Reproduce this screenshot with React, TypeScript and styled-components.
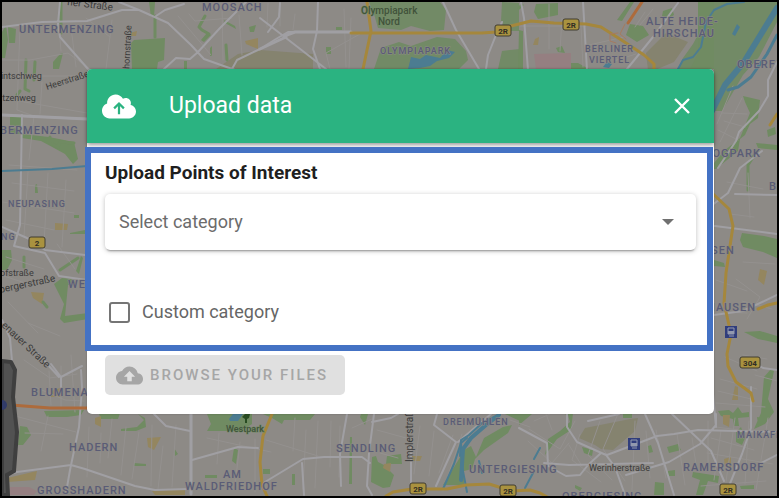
import React, { useState } from "react";
import styled, { createGlobalStyle } from "styled-components";

const GlobalStyle = createGlobalStyle`
  *, *::before, *::after { box-sizing: border-box; }
  body { margin: 0; font-family: Roboto, "Liberation Sans", sans-serif; }
`;

const Page = styled.main`
  position: relative;
  display: flex;
  align-items: flex-start;
  min-height: 100vh;
  padding: 67px 63px 24px 85px;
  border: 2px solid #000;
  background: #8d8a86;
  overflow: hidden;
`;

const MapCanvas = styled.svg`
  position: absolute;
  inset: -2px;
  width: calc(100% + 4px);
  height: calc(100% + 4px);
  font-family: Roboto, "Liberation Sans", sans-serif;
`;

const Dialog = styled.section`
  position: relative;
  flex: 1;
  min-width: 0;
  padding-bottom: 19px;
  border-radius: 5px;
  background: #fff;
  box-shadow: 0 0 2px rgba(0, 0, 0, 0.25);
`;

const Header = styled.header`
  display: flex;
  align-items: center;
  gap: 33px;
  height: 74px;
  padding: 0 20px 0 15px;
  border-radius: 5px 5px 0 0;
  background: #2bb381;
  color: #fff;
  box-shadow: 0 2px 4px rgba(0, 0, 0, 0.4);
`;

const Title = styled.h1`
  flex: 1;
  margin: 0;
  font-size: 23px;
  font-weight: 400;
  line-height: 32px;
`;

const CloseButton = styled.button`
  display: flex;
  padding: 0;
  border: 0;
  background: none;
  color: inherit;
  cursor: pointer;
`;

const Highlight = styled.div`
  position: relative;
  margin: 4px 1px 4px -2px;
  padding: 8px 11px 21px 14px;
  border: 6px solid #4472c4;
  background: #fff;
`;

const SectionTitle = styled.label`
  display: block;
  margin-bottom: 9px;
  color: #1f1f1f;
  font-size: 19px;
  font-weight: 700;
  line-height: 24px;
`;

const SelectBox = styled.div`
  display: grid;
  align-items: center;
  height: 56px;
  border-radius: 5px;
  background: #fff;
  box-shadow: 0 3px 2px -2px rgba(0, 0, 0, 0.3), 0 1px 5px rgba(0, 0, 0, 0.25);
  > * { grid-area: 1 / 1; }
  > svg { justify-self: end; margin-right: 22px; pointer-events: none; }
`;

const Select = styled.select`
  width: 100%;
  height: 100%;
  padding: 0 48px 0 14px;
  border: 0;
  border-radius: 5px;
  background: transparent;
  color: #6c6c6c;
  font: 400 18px/24px Roboto, "Liberation Sans", sans-serif;
  appearance: none;
`;

const CheckRow = styled.label`
  display: flex;
  align-items: center;
  width: fit-content;
  gap: 12px;
  margin: 50px 0 0 4px;
  color: #666;
  font-size: 18px;
  line-height: 24px;
`;

const CheckBox = styled.input`
  width: 21px;
  height: 21px;
  margin: 0;
  border: 2px solid #757575;
  border-radius: 3px;
  background: #fff;
  appearance: none;
  &:checked { background: #2bb381; }
`;

const BrowseButton = styled.button`
  display: flex;
  align-items: center;
  gap: 7px;
  height: 40px;
  margin-left: 18px;
  padding: 0 17px 0 11px;
  border: 0;
  border-radius: 5px;
  background: #e0e0e0;
  color: #a6a6a6;
  font: 500 15px/24px Roboto, "Liberation Sans", sans-serif;
  letter-spacing: 2px;
  white-space: nowrap;
`;

const C = {
  road: "#a09fa3", green: "#708b62", park: "#728a66",
  olive: "#85836f", sand: "#94865f", water: "#4c7c91", yellow: "#a5873c",
  orange: "#ad6b3c", pink: "#957f81",
};

const areas: [string, string][] = [
  [C.olive, "M216 69L238 54L260 50L313 54L313 70ZM648 70L646 53L666 33L688 42L674 62L655 70ZM579 438L585 428L630 419L638 418L635 431L613 450L601 449L595 445Z"],
  [C.green, "M131 43L134 40L165 38L164 60L158 62L157 69H132ZM2 32L6 25L8 40L5 58H2ZM8 27L16 29L15 43H9ZM149 2H155L154 17H151ZM53 62L60 54L63 53L59 69H53ZM201 40L207 33L211 35L204 42ZM224 20L235 26L236 29L225 23ZM249 27L256 25L254 32H250ZM184 61H187V69H184ZM210 48L212 46V56H210ZM326 47H331V54H326ZM336 27H342V30H336Z"],
  [C.park, "M369 2H440L446 10L444 30L430 31L411 26L401 30L378 28L374 14ZM374 69L381 48L399 42L411 46L437 37L455 39L466 51L468 60L459 69ZM498 69L502 51L520 49V70ZM502 2L519 3V31L507 31L501 21ZM708 2H777V22L759 57L743 75L722 111H714V69H678L683 58L693 44L700 31L706 16Z"],
  [C.green, "M536 4L558 3V15L538 19L534 12ZM519 30L523 31V69H518ZM556 48L562 46L565 53L558 52ZM567 63L578 63L589 69H565ZM626 35L630 24L643 26L649 35L637 42ZM663 11L672 8L674 15L669 18L662 16ZM617 20L630 2H634L622 21ZM698 4L706 2L704 12L698 12Z"],
  [C.green, "M698 2H714V69H690L698 54Z"],
  [C.green, "M743 96L760 100L758 118L750 124L745 135L740 139L738 151L716 169H709L724 151L740 138L750 113L745 102ZM756 143L777 145V150L758 148ZM767 130L775 127L776 134L768 137ZM740 240L742 233L764 236L777 239V258L763 252L743 247ZM714 260L724 263L725 267L714 266ZM744 332L760 331L777 336V343L758 339Z"],
  [C.green, "M8 127L22 130V134L11 134ZM22 134L49 137L74 142L78 159L73 164L65 154L54 148L41 141L22 138ZM10 117H22V127L10 125ZM70 233L85 230V234L70 234ZM54 284L62 278L71 279L77 284L68 285L65 316L88 313V319L64 323L60 319L64 304ZM76 271L81 256L83 258L79 274ZM2 250H11L12 260L7 270H2ZM74 215H79V218H74ZM35 185L37 184L38 193H35Z"],
  [C.green, "M20 426L27 427L31 435L23 445H18ZM44 411L84 410L81 415L67 417L47 417ZM99 414L120 413L118 419H101ZM121 429L137 427L144 420L138 414L145 418L146 427L136 431H121ZM134 463L146 464V466H134ZM205 475H217V478H205ZM232 461L234 448L238 450L236 464ZM174 448L178 454L175 456ZM207 414L252 414V424L241 431H207L211 424Z"],
  [C.green, "M263 414H315L310 420H284L282 424L272 418ZM361 414H368L365 425L360 417ZM372 457L376 456L378 462L384 465L394 475L390 487L383 488L371 482ZM387 456L401 454L402 464L386 464ZM350 437H352V484H349ZM263 469H270V474H263ZM292 474H295V485H292ZM459 459L464 450L471 446L476 457L484 438L503 427L512 425L508 433L484 450L475 459L472 469L464 471L464 485H443ZM505 414H520V421Z"],
  [C.green, "M519 414H532L519 425ZM548 439L560 431L570 422L568 415L561 413H573L571 430L557 439L549 450L545 455ZM582 447L593 450L592 456L584 453ZM575 485L582 488L580 491L575 488ZM623 414H632V418H623ZM667 447L678 444L681 450L669 453ZM648 446L651 445L653 452L649 453ZM655 482L664 483V495H654ZM668 471L675 470V476H667ZM693 472L719 476L718 483L708 481L703 495H696L700 480L692 477Z"],
  [C.green, "M718 411L729 410L733 413L738 407L742 413L749 412V417L738 418L739 426H734L733 419L721 416ZM764 377L771 369L774 371L768 399L774 412L765 424L754 429L761 413ZM736 432L741 427L745 438L742 445L736 442ZM740 486L754 485V489L741 489ZM757 417L763 418L758 424Z"],
  [C.sand, "M130 33L137 31L136 36H131ZM51 391L60 388V397H51ZM31 292L44 293L42 304L33 298ZM147 438L161 437L154 450L148 447ZM95 418L101 416L101 427L95 424ZM245 41L258 38V49L246 44ZM55 223L68 224L67 230H55ZM412 456H422L420 461H412ZM384 464L391 463L390 472L383 468ZM735 386L738 387V400H732ZM723 415H730L729 427L723 424ZM760 269L767 271L764 285L758 280ZM535 39L539 37L538 45H533ZM724 459L731 457V467H725ZM3 479L37 471L35 480L7 482ZM152 491L185 489V495H155Z"],
  [C.pink, "M534 54L571 53L571 69H536ZM10 487L29 487L37 491L34 495H8Z"],
];

const greens = [
  "M61 2L61 33", "M35 62L34 80", "M26 60L25 89L29 91", "M60 270L78 258", "M50 137L50 143L58 147L60 142L74 143", "M205 16L199 27L202 30L209 34",
  "M226 45L227 60", "M155 16L155 37", "M17 95L20 91", "M24 257L24 267", "M43 302L47 307", "M519 8L522 5", "M748 190L748 165L757 151",
];

const minor = [
  "M2 60L30 60L68 53L90 69M2 76H86M20 27L17 110L34 116L29 160M42 82L40 114M2 98L87 113M59 27L61 51M71 27L76 67M86 18L110 37M112 20L106 69",
  "M178 16L211 55M189 14L195 21L232 18M222 4L223 60M239 15L242 55M268 3L267 27M280 3V26M295 14L293 30M344 9L346 67M351 18L349 69M360 34L326 53L330 69",
  "M520 26H586M549 4V49M562 18L560 51M581 25L583 67M589 45L624 37M614 61L636 54M645 12L635 27M653 9L640 25",
  "M722 113L747 114M724 121L745 127M718 130L738 140M742 98L720 142M733 86L717 124M727 182L763 189M748 173L750 218M730 214L754 217M743 262L775 264M736 279L760 297L747 319M716 280L747 291M742 301L772 309M717 312L747 313",
  "M9 165L77 170M12 183L74 191M3 202L74 213M28 172L24 237M48 173L44 244M66 180L62 247M6 220L54 230M6 257L44 269M4 276L31 285M8 302L38 333M57 244L75 269M28 323L60 336",
  "M24 360L50 378L77 374M35 387L65 400L84 401M49 371L51 405M61 366V408M71 355L75 412M15 416L76 432M25 433L63 434M48 416L41 451M89 427L87 477M101 433L100 463M112 419L108 458M126 427L121 475M139 432L132 479M152 425L151 486M163 446L158 489M176 425L172 487M207 438L271 452M219 433L217 464M240 442L235 486M255 439L255 492M266 440L318 456M295 418L293 451M306 430L303 489M318 421L315 488M331 421L330 467M340 426L339 477M352 428L372 419M377 430L406 438M380 453L398 458M420 426L414 474M434 431L429 476M453 435L439 473M462 434L443 491M510 420L530 427",
  "M529 429L560 449L575 421M528 441L552 463L569 443M534 421L550 414M546 414L552 430M569 445L582 466M580 434L572 460L601 482M600 421L588 455L612 480M618 414L603 449L625 481M635 421L632 490M646 431L650 478M656 430L666 478M677 434L685 485M692 438L697 471M708 421V466M721 431L714 480M735 418L726 482M749 421L745 484M768 418L756 490M720 379L757 389M718 391L751 399M716 403L765 407M716 427L747 431M711 438L754 450M707 453L773 464M701 486L766 481M743 355L767 359M725 357L757 371M755 375L777 381",
];

const roads = [
  "M2 27L42 22L87 21L122 10H139L168 23L191 45L204 59L235 70M139 10L119 2M60 2L58 24L60 37L88 69M156 16L165 10L184 4M164 69L176 58L190 59L198 52L220 28L246 2M232 69L237 60L260 49L276 39L288 32H351",
  "M260 18L286 38L326 69M280 3L279 17L268 32M318 2L317 31L313 49L320 69M443 2L456 30L479 69M486 69L488 55L496 35L502 22",
  "M583 2L587 70M528 70L524 18L521 2M627 69L653 37L678 3M777 62L768 80V96L759 111L739 132L736 141L718 168M762 151L740 168L728 193L690 222",
  "M2 115L87 119M22 115L20 225L14 246M2 227L27 238L45 250L85 255M14 246L45 253L59 276L87 280M2 320L10 338L12 361M51 364L61 377L82 366M61 377V390M59 377L38 354",
  "M81 370L82 388L79 427L70 470L66 493M2 476L17 472L71 465L85 469L135 486L155 490L188 489M191 414V494M192 460L238 447L258 448M154 414L166 426L190 431",
  "M260 485L303 459L324 457H362L370 463M347 414L340 454L341 486M302 463L304 495M374 414L369 453L367 486L372 495M411 447V488M437 414L434 425L456 442L436 486M458 442L491 414M372 422L391 418L398 414",
  "M519 428L547 443L548 466L566 476L580 475L588 465L601 453L607 455L657 436L674 434L698 430L777 432M672 414L711 451L724 481M645 414L658 443L674 495M567 414V427L577 442L606 455L615 467L625 495M588 421L619 414M544 463L569 465L653 463M716 414L716 425L700 444L669 462L626 475M755 363L763 368L777 370M751 387L751 428L742 454L727 491M713 366V394L716 427M777 455L759 464",
  "M735 194L777 195M715 226L777 234M690 222L714 226M714 315L743 311L777 295",
];

const waters = [
  "M777 8L744 62L725 85L712 111", "M777 35L767 54L751 77L738 87L728 90",
];
const thinWater = [
  "M678 69L683 60L693 57L701 47L706 22L714 10L727 4L744 2",
  "M2 171L52 169L87 166", "M460 456L461 440L469 435L482 423L500 414", "M443 489L454 464L461 443L467 438",
  "M461 442L462 466L467 492", "M479 461L482 473", "M525 488L533 473M534 459L540 448",
];

const yellows = [
  "M351 33H482L496 32L511 26L531 21L554 23L586 24L601 27L623 41L644 55L654 64V70",
  "M367 2L371 31L363 69", "M272 414L263 436L260 462L262 485L267 496",
  "M386 496L393 492L412 489H447L466 485L489 484L512 491L530 490L540 493L549 498",
  "M711 192L729 209L733 226L726 273L724 303L731 334L727 354L728 366L736 382L751 393L753 401",
  "M758 309L768 305L777 303", "M777 114L770 125",
];

type Label = { t: string; x: number; y: number; s?: number; r?: number; k?: "street" | "park" };
const labels: Label[] = [
  { t: "UNTERMENZING", x: 19, y: 33 }, { t: "MOOSACH", x: 202, y: 11 },
  { t: "OLYMPIAPARK", x: 380, y: 54, s: 9 }, { t: "ALTE HEIDE-", x: 646, y: 25 },
  { t: "HIRSCHAU", x: 653, y: 37 }, { t: "BERLINER", x: 585, y: 52, s: 9 }, { t: "VIERTEL", x: 589, y: 63, s: 9 },
  { t: "OBERF", x: 737, y: 68 }, { t: "BERMENZING", x: 0, y: 134 }, { t: "ZOGPARK", x: 705, y: 157 },
  { t: "NEUPASING", x: 8, y: 207, s: 9 }, { t: "NG", x: 1, y: 240, s: 9 }, { t: "WEST", x: 68, y: 288 },
  { t: "ISEN", x: 707, y: 254 }, { t: "HAUSEN", x: 707, y: 311 }, { t: "B", x: 769, y: 190 },
  { t: "BLUMENAU", x: 31, y: 396 }, { t: "HADERN", x: 69, y: 451 }, { t: "GROSSHADERN", x: 37, y: 494 },
  { t: "AM", x: 223, y: 478 }, { t: "WALDFRIEDHOF", x: 185, y: 490 }, { t: "SENDLING", x: 336, y: 452 },
  { t: "DREIMÜHLEN", x: 443, y: 425, s: 9 }, { t: "UNTERGIESING", x: 469, y: 473 },
  { t: "OBERGIESING", x: 562, y: 500 }, { t: "RAMERSDORF", x: 683, y: 471 }, { t: "MAIKÄFE", x: 737, y: 438, s: 9 },
  { t: "ner Straße", x: 67, y: 5, s: 10, r: 7, k: "street" },
  { t: "dhornstraße", x: 129, y: 74, s: 9, r: -87, k: "street" },
  { t: "aintschweg", x: -4, y: 79, s: 9, k: "street" }, { t: "Heerstraße", x: 47, y: 90, s: 9, r: -18, k: "street" },
  { t: "itzenweg", x: 0, y: 101, s: 9, k: "street" }, { t: "ofstraße", x: 0, y: 276, s: 9, k: "street" },
  { t: "bergerstraße", x: 0, y: 293, s: 10, r: -12, k: "street" },
  { t: "enauer Straße", x: 1, y: 326, s: 10, r: 43, k: "street" },
  { t: "Implerstraße", x: 413, y: 462, s: 10, r: -90, k: "street" },
  { t: "Werinherstraße", x: 589, y: 471, s: 9, k: "street" },
  { t: "Olympiapark", x: 361, y: 14, s: 10, k: "park" }, { t: "Nord", x: 378, y: 25, s: 10, k: "park" },
  { t: "Westpark", x: 226, y: 432, s: 9, k: "park" },
];
const shields: [string, number, number][] = [
  ["2R", 503, 30], ["2R", 571, 24], ["2", 37, 242], ["2R", 418, 488], ["2R", 508, 490], ["304", 750, 362], ["2R", 728, 489],
];

const Line = ({ d, c, w }: { d: string; c: string; w: number }) => (
  <path d={d} stroke={c} strokeWidth={w} fill="none" strokeLinecap="round" strokeLinejoin="round" />
);

function CityMap() {
  return (
    <MapCanvas viewBox="0 0 779 498" preserveAspectRatio="xMidYMid slice" aria-hidden="true">
      <rect width="779" height="498" fill="#8d8a86" />
      {areas.map(([c, d]) => <path key={d} d={d} fill={c} />)}
      {greens.map((d) => <Line key={d} d={d} c={C.green} w={3} />)}
      {minor.map((d) => <Line key={d} d={d} c="#94918f" w={1} />)}
      <path d="M408 69L411 57L420 59L426 55L440 58L447 50L455 52L449 58L437 61L430 66L420 68ZM603 67L607 62L612 64L609 68ZM732 34L737 24L740 27L735 36ZM229 419L233 414H243L238 421H230Z" fill={C.water} />
      {roads.map((d) => <Line key={d} d={d} c={C.road} w={2} />)}
      <Line d="M284 36L295 32H351M191 414V494M2 115L87 119M260 49L286 37" c={C.road} w={3} />
      {thinWater.map((d) => <Line key={d} d={d} c={C.water} w={2} />)}
      {waters.map((d, i) => <Line key={d} d={d} c={C.water} w={i ? 3 : 6} />)}
      <Line d="M499 415L486 425L471 438L463 449L461 480" c={C.water} w={4} />
      {yellows.map((d) => <Line key={d} d={d} c={C.yellow} w={3} />)}
      <Line d="M628 23L642 2M11 405L50 408H88" c={C.orange} w={3} />
      <Line d="M625 24L620 34L626 39M618 33L610 34L610 41L616 43" c="#a57b60" w={1} />
      <path d="M2 361L11 362L15 370L13 397L17 432L14 471L7 475L8 495H2Z" fill="#525252" stroke="#3f3f3f" strokeWidth="4" />
      <circle cx="2" cy="405" r="5" fill="#313b69" />
      {labels.map(({ t, x, y, s = 11, r = 0, k }) => (
        <text
          key={t + x} x={x} y={y} fontSize={s} fontWeight={k === "street" ? 400 : 500}
          fill={k === "street" ? "#3b3b3b" : k === "park" ? "#41533b" : "#5a5c76"}
          stroke={k === "park" ? "#728a66" : "#8d8a86"} strokeWidth="1" paintOrder="stroke"
          letterSpacing={k ? 0 : 1} transform={r ? `rotate(${r} ${x} ${y})` : undefined}
        >{t}</text>
      ))}
      {shields.map(([t, x, y]) => (
        <g key={t + x}>
          <rect x={x - (t.length > 2 ? 10 : 8)} y={y - 5} width={t.length > 2 ? 20 : 16} height="11" rx="2" fill="#a9923f" stroke="#403d30" />
          <text x={x} y={y + 4} fontSize="8" fontWeight="700" textAnchor="middle" fill="#312e24">{t}</text>
        </g>
      ))}
      {[[731, 332], [634, 444]].map(([x, y]) => (
        <g key={x}>
          <rect x={x - 6} y={y - 6} width="12" height="12" fill="#303d7c" />
          <path d={`M${x - 3} ${y - 4}h6v6h-6zM${x - 2} ${y + 4}h5`} fill="none" stroke="#9299ae" />
          <path d={`M${x - 3} ${y - 1}h6v3h-6z`} fill="#9299ae" />
        </g>
      ))}
      <path d="M246 413L250 414L249 418L247 419V423H245V419L242 417Z" fill="#294b22" />
    </MapCanvas>
  );
}

export default function App() {
  const [custom, setCustom] = useState(false);
  return (
    <>
      <GlobalStyle />
      <Page>
        <CityMap />
        <Dialog role="dialog" aria-labelledby="dialog-title">
          <Header>
            <svg width="34" height="25" viewBox="0 32 640 448" aria-hidden="true">
              <path fill="#fff" d="M537.6 226.6c4.1-10.7 6.4-22.4 6.4-34.6 0-53-43-96-96-96-19.7 0-38.1 6-53.3 16.2C367 64.2 315.3 32 256 32c-88.4 0-160 71.6-160 160 0 2.7.1 5.4.2 8.1C40.2 219.8 0 273.2 0 336c0 79.5 64.5 144 144 144h368c70.7 0 128-57.3 128-128 0-61.9-44-113.6-102.4-125.4z" />
              <path fill="none" stroke="#2bb381" strokeWidth="42" d="M320 402V195M228 292L320 200L412 292" />
            </svg>
            <Title id="dialog-title">Upload data</Title>
            <CloseButton type="button" aria-label="Close">
              <svg width="24" height="24" viewBox="0 0 24 24" aria-hidden="true">
                <path d="M5 5L19 19M19 5L5 19" stroke="currentColor" strokeWidth="2.4" />
              </svg>
            </CloseButton>
          </Header>
          <Highlight>
            <SectionTitle htmlFor="category">Upload Points of Interest</SectionTitle>
            <SelectBox>
              <Select id="category" defaultValue="">
                <option value="">Select category</option>
              </Select>
              <svg width="12" height="6" viewBox="0 0 12 6" aria-hidden="true">
                <path d="M0 0H12L6 6Z" fill="#707070" />
              </svg>
            </SelectBox>
            <CheckRow>
              <CheckBox type="checkbox" checked={custom} onChange={(e) => setCustom(e.target.checked)} />
              Custom category
            </CheckRow>
          </Highlight>
          <BrowseButton type="button" disabled>
            <svg width="27" height="27" viewBox="0 0 24 24" fill="currentColor" aria-hidden="true">
              <path d="M19.35 10.04C18.67 6.59 15.64 4 12 4 9.11 4 6.6 5.64 5.35 8.04 2.34 8.36 0 10.91 0 14c0 3.31 2.69 6 6 6h13c2.76 0 5-2.24 5-5 0-2.64-2.05-4.78-4.65-4.96zM14 13v4h-4v-4H7l5-5 5 5h-3z" />
            </svg>
            BROWSE YOUR FILES
          </BrowseButton>
        </Dialog>
      </Page>
    </>
  );
}
